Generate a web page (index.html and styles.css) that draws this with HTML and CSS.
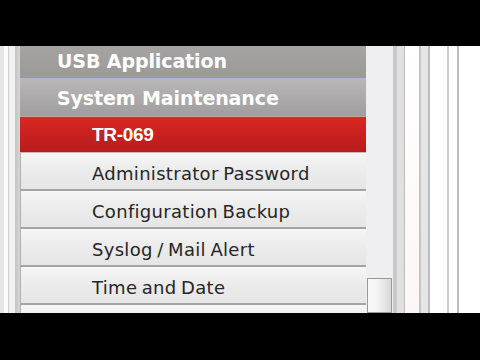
FILE: index.html
```html
<!DOCTYPE html>
<html>
<head>
<meta charset="utf-8">
<link rel="stylesheet" href="styles.css">
</head>
<body>
<div class="screen">
  <div class="letterbox top"></div>
  <div class="content">
    <div class="left-frame">
      <div class="s s1"></div><div class="s s2"></div><div class="s s3"></div><div class="s s4"></div><div class="s s5"></div>
    </div>
    <nav class="menu">
      <div class="row head usb"><span class="head-label">USB Application</span></div>
      <div class="row head sys"><span class="head-label">System Maintenance</span></div>
      <div class="row active"><span class="active-label">TR-069</span></div>
      <div class="row item"><span class="item-label">Administrator Password</span></div>
      <div class="row item"><span class="item-label">Configuration Backup</span></div>
      <div class="row item"><span class="item-label">Syslog / Mail Alert</span></div>
      <div class="row item"><span class="item-label">Time and Date</span></div>
      <div class="row item"><span class="item-label"></span></div>
    </nav>
    <div class="track">
      <div class="thumb"></div>
    </div>
    <div class="right-frame">
      <div class="r r1"></div><div class="r r2"></div><div class="r r3"></div><div class="r r4"></div>
      <div class="r r5"></div><div class="r r6"></div><div class="r r7"></div><div class="r r8"></div>
      <div class="r r9"></div><div class="r r10"></div><div class="r r11"></div><div class="r r12"></div>
    </div>
  </div>
  <div class="letterbox bottom"></div>
</div>
</body>
</html>
```

FILE: styles.css
```css
html, body {
  margin: 0;
  padding: 0;
  background: #000;
}
.screen {
  width: 480px;
  height: 360px;
  display: flex;
  flex-direction: column;
  overflow: hidden;
}
.letterbox { background: #000; flex: none; }
.letterbox.top { height: 46px; }
.letterbox.bottom { height: 47px; }
.content {
  height: 267px;
  flex: none;
  display: flex;
  overflow: hidden;
  background: #fff;
}
.left-frame, .right-frame { display: flex; flex: none; }
.left-frame { width: 20px; }
.s1 { width: 4px; background: #e6e6e6; }
.s2 { width: 4px; background: #fbfbfb; }
.s3 { width: 1px; background: #cfcfcf; }
.s4 { width: 6px; background: #f1f1f1; }
.s5 { width: 5px; background: linear-gradient(to right, #c4c4c4, #d6d6d6); }

.menu {
  width: 346px;
  flex: none;
  display: flex;
  flex-direction: column;
}
.row {
  flex: none;
  display: flex;
  align-items: center;
  box-sizing: border-box;
}
.head-label {
  font-family: "DejaVu Sans", Verdana, sans-serif;
  font-weight: bold;
  font-size: 19px;
  color: #fff;
  padding-left: 37px;
  letter-spacing: -0.1px;
}
.usb {
  height: 33px;
  padding-bottom: 3px;
  background: linear-gradient(#a6a4a3, #9c9a99);
  border-bottom: 1px solid #a7b6d4;
}
.sys {
  height: 38px;
  background: linear-gradient(#b9b7b7, #9f9d9d);
  border-bottom: 1px solid #c4a8a8;
}
.active {
  height: 36px;
  padding-top: 1px;
  background: linear-gradient(#d92820, #c11f1e 70%, #b71c1c);
  border-bottom: 1px solid #d9b3b3;
}
.active-label {
  font-family: "Liberation Sans", Arial, sans-serif;
  font-weight: bold;
  font-size: 19px;
  color: #fff;
  padding-left: 72px;
  letter-spacing: -0.3px;
}
.item {
  height: 38px;
  background: linear-gradient(#f6f6f6, #ebebeb 50%, #e6e6e6);
  border-bottom: 2px solid #a4a4a4;
  border-left: 1px solid #b0b0b0;
  padding-top: 5px;
}
.item-label {
  font-family: "DejaVu Sans", Verdana, sans-serif;
  font-size: 18px;
  color: #262626;
  padding-left: 71px;
  letter-spacing: 0.3px;
  word-spacing: -1.5px;
}
.track {
  width: 27px;
  flex: none;
  background: #efeff1;
  display: flex;
  flex-direction: column;
}
.thumb {
  margin-top: 232px;
  margin-left: 1px;
  width: 25px;
  height: 60px;
  box-sizing: border-box;
  border: 1px solid #999;
  background: linear-gradient(to right, #fafafa, #f4f4f4 40%, #d8d8d8);
}
.right-frame { width: 87px; }
.r1 { width: 4px; background: #c8c8c8; }
.r2 { width: 7px; background: #e0e0e0; }
.r3 { width: 1px; background: #bbb; }
.r4 { width: 14px; background: linear-gradient(#fff, #fdf6f6); }
.r5 { width: 2px; background: #c4c4c4; }
.r6 { width: 7px; background: #e6e6e6; }
.r7 { width: 2px; background: #bbb; }
.r8 { width: 17px; background: #fff; }
.r9 { width: 2px; background: #ccc; }
.r10 { width: 8px; background: #fff; }
.r11 { width: 2px; background: #bbb; }
.r12 { width: 21px; background: #fff; }
```
